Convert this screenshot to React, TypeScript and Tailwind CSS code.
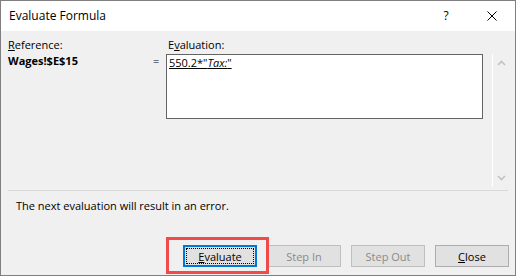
import { ReactNode } from "react";

const font = "font-['Open_Sans',sans-serif] text-[11px]";

export default function App() {
  return (
    <div
      className={`w-[516px] h-[276px] flex flex-col border border-[#7f7f7f] bg-[#f0f0f0] text-black ${font}`}
    >
      <TitleBar />

      <div className="flex-1 flex flex-col">
        {/* reference / evaluation area */}
        <div className="flex pt-[6px] pl-[7px]">
          <div className="w-[144px] leading-[15px]">
            <div>
              <span className="underline">R</span>eference:
            </div>
            <div className="mt-[1px] font-bold">Wages!$E$15</div>
          </div>

          <div className="w-[14px] leading-[15px]">
            <div className="h-[16px]" />
            <div className="pl-[1px]">=</div>
          </div>

          <div className="w-[317px] flex flex-col">
            <div className="leading-[15px] pl-[2px]">
              E<span className="underline">v</span>aluation:
            </div>
            <div className="mt-[2px] h-[65px] border border-[#646464] bg-white pl-[2px] leading-[13px] pt-[1px]">
              <span className="underline">
                550.2*"<span className="italic">Tax:</span>"
              </span>
            </div>
          </div>

          <div className="ml-[9px] w-[18px] flex flex-col">
            <div className="h-[17px]" />
            <ScrollBar />
          </div>
        </div>

        <div className="mt-[3px] mx-[7px] h-px bg-[#d9d9d9]" />

        <div className="mt-[7px] pl-[15px] leading-[15px]">
          The next evaluation will result in an error.
        </div>

        <div className="mt-[32px] flex justify-end gap-[10px] pr-[6px]">
          <div className="relative">
            <div className="absolute -left-[17px] -top-[8px] -right-[12px] -bottom-[7px] border-[3px] border-[#f04a4a]" />
            <button className="relative w-[74px] h-[22px] bg-[#e1e1e1] border-2 border-[#0078d7] p-px">
              <div className="h-full border border-dotted border-black flex items-center justify-center leading-none">
                <span>
                  <span className="underline">E</span>valuate
                </span>
              </div>
            </button>
          </div>
          <Btn disabled>Step In</Btn>
          <Btn disabled>Step Out</Btn>
          <Btn>
            <span className="underline">C</span>lose
          </Btn>
        </div>
      </div>
    </div>
  );
}

function TitleBar() {
  return (
    <div className="h-[30px] bg-white flex items-center">
      <div className="pl-[8px] text-[12px] flex-1">Evaluate Formula</div>
      <div className="w-[46px] h-full flex items-center justify-center text-[12px]">
        ?
      </div>
      <div className="w-[46px] h-full flex items-center justify-center">
        <svg width="10" height="10" viewBox="0 0 10 10">
          <path d="M0.5 0.5 L9.5 9.5 M9.5 0.5 L0.5 9.5" stroke="#000" strokeWidth="1" />
        </svg>
      </div>
    </div>
  );
}

function ScrollBar() {
  return (
    <div className="h-[133px] border-l border-white flex flex-col items-center justify-between py-[6px]">
      <svg width="9" height="6" viewBox="0 0 9 6">
        <path d="M1 5 L4.5 1.5 L8 5" fill="none" stroke="#c2c2c2" strokeWidth="1.6" />
      </svg>
      <svg width="9" height="6" viewBox="0 0 9 6">
        <path d="M1 1 L4.5 4.5 L8 1" fill="none" stroke="#c2c2c2" strokeWidth="1.6" />
      </svg>
    </div>
  );
}

function Btn({ children, disabled }: { children: ReactNode; disabled?: boolean }) {
  return (
    <button
      className={`w-[74px] h-[22px] bg-[#e1e1e1] border flex items-center justify-center leading-none ${
        disabled ? "border-[#bfbfbf] text-[#8a8a8a]" : "border-[#adadad] text-black"
      }`}
    >
      <span>{children}</span>
    </button>
  );
}
